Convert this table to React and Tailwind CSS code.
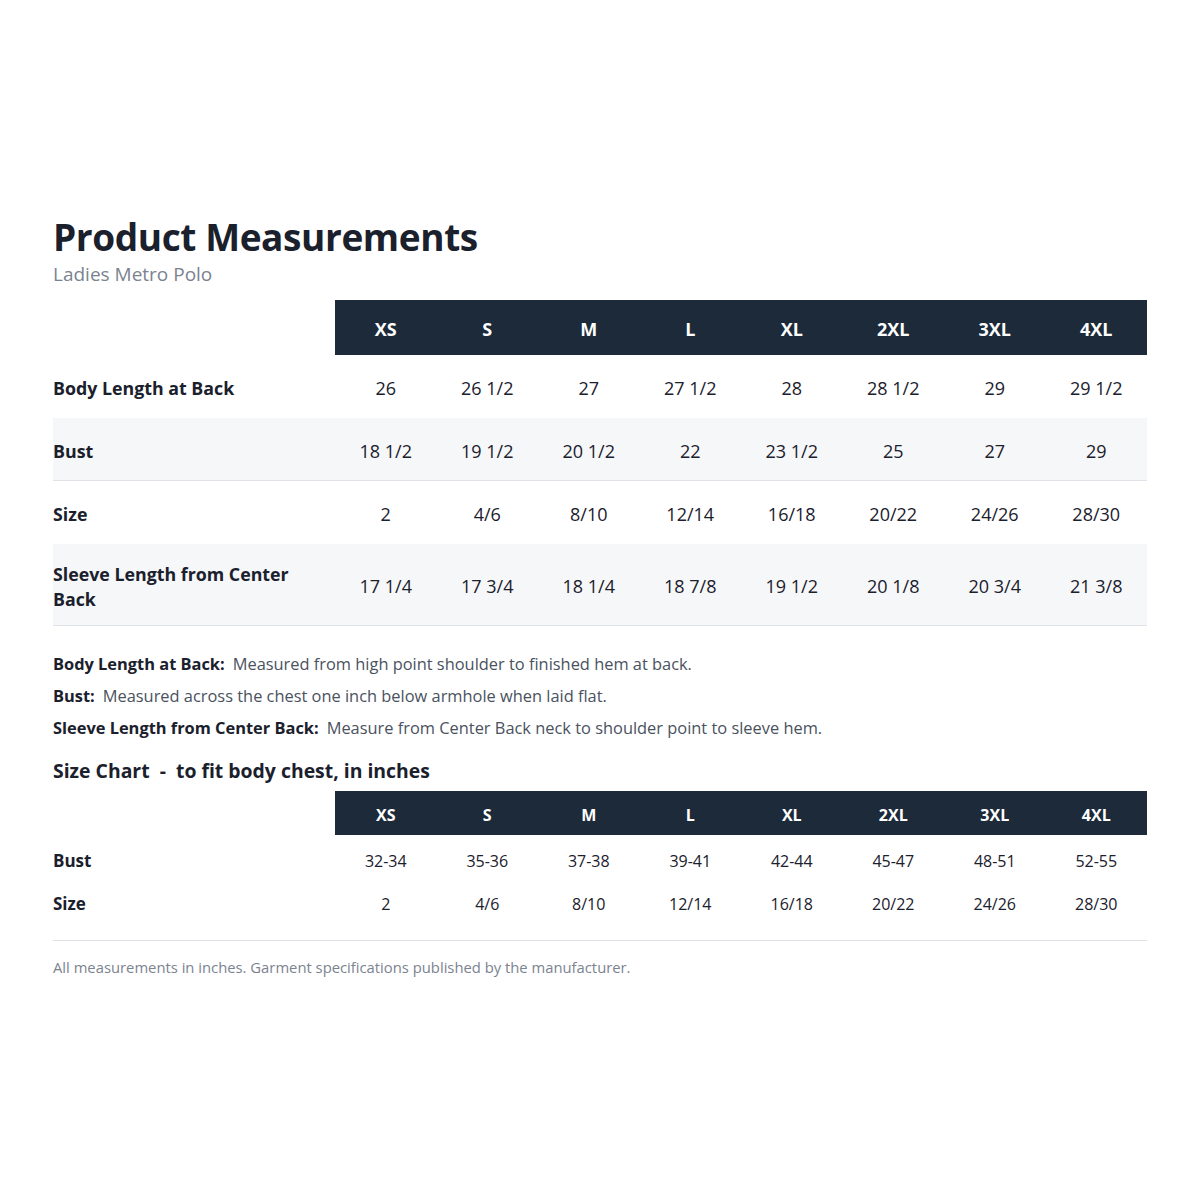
const sizes = ["XS", "S", "M", "L", "XL", "2XL", "3XL", "4XL"];

const measurements = [
  { label: "Body Length at Back", values: ["26", "26 1/2", "27", "27 1/2", "28", "28 1/2", "29", "29 1/2"], h: "h-[63px]", bg: "" },
  { label: "Bust", values: ["18 1/2", "19 1/2", "20 1/2", "22", "23 1/2", "25", "27", "29"], h: "h-[63px]", bg: "bg-[#f6f7f9] border-b border-[#dfe2e6]" },
  { label: "Size", values: ["2", "4/6", "8/10", "12/14", "16/18", "20/22", "24/26", "28/30"], h: "h-[63px]", bg: "" },
  { label: "Sleeve Length from Center Back", values: ["17 1/4", "17 3/4", "18 1/4", "18 7/8", "19 1/2", "20 1/8", "20 3/4", "21 3/8"], h: "h-[82px]", bg: "bg-[#f6f7f9] border-b border-[#dfe2e6]" },
];

const chart = [
  { label: "Bust", values: ["32-34", "35-36", "37-38", "39-41", "42-44", "45-47", "48-51", "52-55"] },
  { label: "Size", values: ["2", "4/6", "8/10", "12/14", "16/18", "20/22", "24/26", "28/30"] },
];

const notes = [
  ["Body Length at Back:", "Measured from high point shoulder to finished hem at back."],
  ["Bust:", "Measured across the chest one inch below armhole when laid flat."],
  ["Sleeve Length from Center Back:", "Measure from Center Back neck to shoulder point to sleeve hem."],
];

function HeaderRow({ h, text }) {
  return (
    <div className="grid grid-cols-[282px_repeat(8,1fr)]">
      <div />
      {sizes.map((s) => (
        <div key={s} className={`flex items-center justify-center bg-[#1c2a3a] pt-[3px] font-bold text-white ${h} ${text}`}>
          {s}
        </div>
      ))}
    </div>
  );
}

export default function App() {
  return (
    <div className="min-h-[1200px] bg-white px-[53px] pt-[214px] text-[#1a202c]" style={{ fontFamily: '"Open Sans", "Noto Sans", sans-serif' }}>
      <h1 className="text-[37px] font-bold leading-[46px] tracking-[-0.4px]">Product Measurements</h1>
      <p className="mt-[1px] text-[19px] leading-[26px] text-[#7b838f]">Ladies Metro Polo</p>

      <div className="mt-[13px]">
        <HeaderRow h="h-[55px]" text="text-[18px]" />
        {measurements.map((row) => (
          <div key={row.label} className={`grid grid-cols-[282px_repeat(8,1fr)] items-center pt-[4px] ${row.h} ${row.bg}`}>
            <div className="pr-4 text-[17.8px] font-bold leading-[25px]">{row.label}</div>
            {row.values.map((v, i) => (
              <div key={i} className="text-center text-[18px]">{v}</div>
            ))}
          </div>
        ))}
      </div>

      <div className="mt-[27px] flex flex-col gap-[10px] text-[16.4px] leading-[22px]">
        {notes.map(([k, v]) => (
          <p key={k}>
            <span className="font-bold">{k}</span>
            <span className="ml-[8px] text-[#4a5260]">{v}</span>
          </p>
        ))}
      </div>

      <h2 className="mt-[18px] text-[19.4px] font-bold leading-[28px]">Size Chart&nbsp; - &nbsp;to fit body chest, in inches</h2>

      <div className="mt-[6px]">
        <HeaderRow h="h-[44px]" text="text-[16px]" />
        <div className="pt-[4px]">
          {chart.map((row) => (
            <div key={row.label} className="grid h-[43px] grid-cols-[282px_repeat(8,1fr)] items-center">
              <div className="text-[17px] font-bold">{row.label}</div>
              {row.values.map((v, i) => (
                <div key={i} className="text-center text-[16px]">{v}</div>
              ))}
            </div>
          ))}
        </div>
        <div className="mt-[15px] border-b border-[#dfe2e6]" />
      </div>

      <p className="mt-[15px] text-[14.8px] text-[#7b838f]">All measurements in inches. Garment specifications published by the manufacturer.</p>
    </div>
  );
}
